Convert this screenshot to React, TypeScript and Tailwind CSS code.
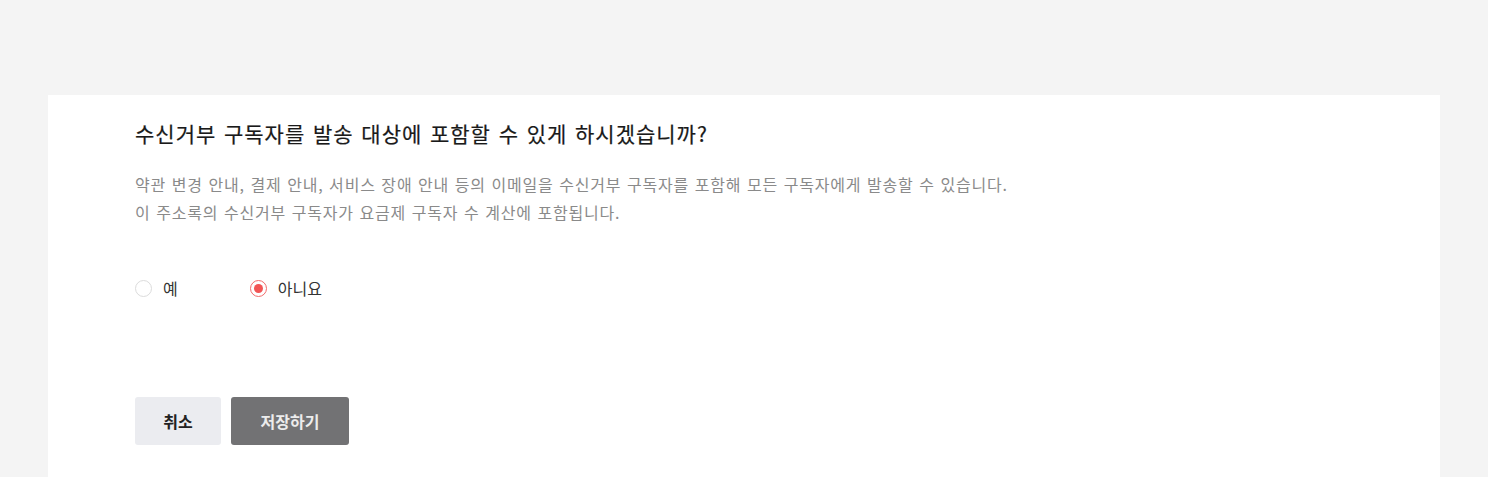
import React, { useState } from 'react';

const App: React.FC = () => {
  const [allow, setAllow] = useState<'yes' | 'no'>('no');

  const Radio = ({ value, label }: { value: 'yes' | 'no'; label: string }) => {
    const checked = allow === value;
    return (
      <label className="flex items-center gap-[11px] cursor-pointer" onClick={() => setAllow(value)}>
        <span
          className={`w-[17px] h-[17px] rounded-full border flex items-center justify-center bg-white ${
            checked ? 'border-[#f26b6b]' : 'border-[#dcdcdc]'
          }`}
        >
          {checked && <span className="w-[9px] h-[9px] rounded-full bg-[#f25555]" />}
        </span>
        <span className="text-[16px] text-[#333]">{label}</span>
      </label>
    );
  };

  return (
    <div
      className="min-h-screen bg-[#f4f4f4] pt-[95px] px-[48px] overflow-hidden"
      style={{ fontFamily: '"Noto Sans CJK KR", "Noto Sans", sans-serif' }}
    >
      <div className="bg-white h-[382px] pl-[87px] pt-[20px]">
        <h2 className="text-[21px] font-normal text-[#1a1a1a] leading-[36px] tracking-[1px] [word-spacing:2px] whitespace-nowrap [-webkit-text-stroke:0.2px_#1a1a1a]">
          수신거부 구독자를 발송 대상에 포함할 수 있게 하시겠습니까?
        </h2>
        <div className="mt-[19px] text-[16px] leading-[28px] text-[#8a8a8a] tracking-[0.8px] [word-spacing:1.3px] whitespace-nowrap">
          <p>약관 변경 안내, 결제 안내, 서비스 장애 안내 등의 이메일을 수신거부 구독자를 포함해 모든 구독자에게 발송할 수 있습니다.</p>
          <p>이 주소록의 수신거부 구독자가 요금제 구독자 수 계산에 포함됩니다.</p>
        </div>
        <div className="mt-[50px] flex items-center gap-[72px]">
          <Radio value="yes" label="예" />
          <Radio value="no" label="아니요" />
        </div>
        <div className="mt-[97px] flex gap-[10px]">
          <button className="w-[86px] h-[48px] rounded-[3px] bg-[#ebecf0] text-[16px] font-semibold text-[#222]">
            취소
          </button>
          <button className="w-[118px] h-[48px] rounded-[3px] bg-[#727274] text-[16px] font-semibold text-[#ececec]">
            저장하기
          </button>
        </div>
      </div>
    </div>
  );
};

export default App;
